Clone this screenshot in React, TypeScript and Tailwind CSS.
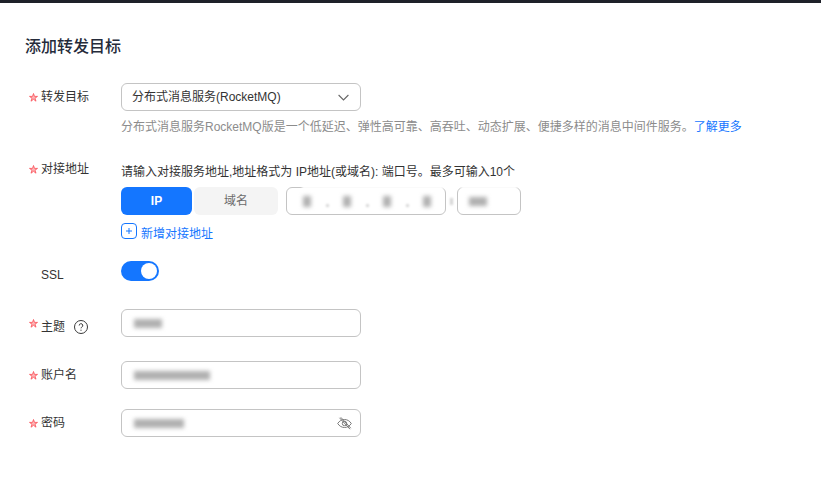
import React from "react";

const font = { fontFamily: '"Liberation Sans", "Noto Sans CJK SC", sans-serif' };

function Star({ className = "" }: { className?: string }) {
  return (
    <svg width="9" height="9" viewBox="0 0 9 9" className={`mr-[3px] shrink-0 ${className}`}>
      <path d="M4.5.5l1 2.900h3L6 5.200l1 3-2.500-1.900-2.500 1.900 1-3L.5 3.400h3z" fill="#fdb4b6" stroke="#fa4d56" strokeWidth="0.8" strokeLinejoin="round" />
    </svg>
  );
}

function Label({ text, required = true, tail, offset = "", starClass = "" }: { text: string; required?: boolean; tail?: React.ReactNode; offset?: string; starClass?: string }) {
  return (
    <div className={`flex w-[96px] shrink-0 items-center pl-1 text-xs text-[#333333] ${offset}`}>
      {required ? <Star className={starClass} /> : <span className="w-3 shrink-0" />}
      <span>{text}</span>
      {tail}
    </div>
  );
}

function Blur({ className }: { className: string }) {
  return <div className={`bg-[#b0b0b0] blur-[2px] ${className}`} />;
}

function TextBox({ blurWidth, children }: { blurWidth: string; children?: React.ReactNode }) {
  return (
    <div className="flex h-7 w-[240px] items-center justify-between rounded-md border border-[#c4c4c4] bg-white pl-3 pr-2">
      <Blur className={`h-[9px] ${blurWidth}`} />
      {children}
    </div>
  );
}

export default function App() {
  return (
    <div style={font} className="h-[477px] w-[821px] overflow-hidden bg-white">
      <div className="h-[3px] bg-[#1e2129]" />
      <div className="pl-[25px]">
        <h1 className="mt-[34px] h-[20px] text-base font-medium leading-[20px] text-[#252b3a]">添加转发目标</h1>

        <div className="mt-[26px] flex h-7">
          <Label text="转发目标" />
          <div className="flex w-[240px] items-center justify-between rounded-md border border-[#c4c4c4] pl-[10px] pr-[11px] text-xs text-[#333333]">
            <span>分布式消息服务(RocketMQ)</span>
            <svg width="11" height="7" viewBox="0 0 11 7" fill="none">
              <path d="M.6 1l4.900 4.900L10.400 1" stroke="#666666" strokeWidth="1.1" />
            </svg>
          </div>
        </div>
        <p className="ml-[96px] mt-[8px] h-4 text-xs leading-4 text-[#8c8c8c]">
          分布式消息服务RocketMQ版是一个低延迟、弹性高可靠、高吞吐、动态扩展、便捷多样的消息中间件服务。<span className="text-[#1476ff]">了解更多</span>
        </p>

        <div className="mt-[26px] flex">
          <Label text="对接地址" offset="h-4 self-start" />
          <div>
            <p className="mt-[2px] h-4 pt-px text-xs leading-4 text-[#333333]">请输入对接服务地址,地址格式为 IP地址(或域名): 端口号。最多可输入10个</p>
            <div className="mt-[8px] flex h-7 items-center">
              <div className="flex h-7 w-[71px] items-center justify-center rounded-md bg-[#1476ff] text-xs font-bold text-white">IP</div>
              <div className="ml-[2px] flex h-7 w-[84px] items-center justify-center rounded-md bg-[#f4f4f4] text-xs text-[#6b6b6b]">域名</div>
              <div className="relative ml-2 flex h-7 w-[160px] items-center gap-[32px] rounded-md border border-[#c4c4c4] pl-[16px]">
                <div className="absolute -top-[2px] left-[15px] right-[2px] h-[6px] bg-white blur-[1px]" />
                <Blur className="h-[11px] w-[8px]" />
                <Blur className="h-[11px] w-[8px]" />
                <Blur className="h-[11px] w-[8px]" />
                <Blur className="h-[11px] w-[8px]" />
                <div className="absolute left-[39px] top-[16px] h-[3px] w-[3px] rounded-full bg-[#cccccc] blur-[1px]" />
                <div className="absolute left-[79px] top-[16px] h-[3px] w-[3px] rounded-full bg-[#cccccc] blur-[1px]" />
                <div className="absolute left-[119px] top-[16px] h-[3px] w-[3px] rounded-full bg-[#cccccc] blur-[1px]" />
              </div>
              <div className="ml-[4px] h-[7px] w-[3px] bg-[#d4d4d4] blur-[1px]" />
              <div className="relative ml-[4px] flex h-7 w-[64px] items-center rounded-md border border-[#c4c4c4] pl-[11px]">
                <div className="absolute -top-[2px] left-[3px] right-[3px] h-[5px] bg-white blur-[1px]" />
                <Blur className="h-[9px] w-[18px]" />
              </div>
            </div>
            <div className="mt-[7px] flex h-[18px] items-start text-xs text-[#1476ff]">
              <svg width="16" height="16" viewBox="0 0 16 16" fill="none" className="mr-[4px] mt-px">
                <rect x="0.5" y="0.5" width="15" height="15" rx="3.5" stroke="#1476ff" />
                <path d="M8 5v6M5 8h6" stroke="#1476ff" />
              </svg>
              <span className="mt-[4px] leading-4">新增对接地址</span>
            </div>
          </div>
        </div>

        <div className="mt-[21px] flex h-5">
          <Label text="SSL" required={false} offset="mt-[8px]" />
          <div className="flex h-5 w-[38px] items-center justify-end rounded-full bg-[#1476ff] pr-[2px]">
            <div className="h-4 w-4 rounded-full bg-white" />
          </div>
        </div>

        <div className="mt-[28px] flex h-7">
          <Label
            text="主题"
            offset="mt-[8px]"
            starClass="-mt-[8px]"
            tail={
              <svg width="14" height="14" viewBox="0 0 14 14" fill="none" className="ml-[9px]">
                <circle cx="7" cy="7" r="6.500" stroke="#3a3a3a" />
                <path d="M5.200 5.500a1.800 1.800 0 1 1 2.600 1.600c-.6.300-.8.600-.8 1.200" stroke="#3a3a3a" />
                <circle cx="7" cy="10.200" r="0.600" fill="#3a3a3a" />
              </svg>
            }
          />
          <TextBox blurWidth="w-[28px]" />
        </div>

        <div className="mt-6 flex h-7">
          <Label text="账户名" />
          <TextBox blurWidth="w-[76px]" />
        </div>

        <div className="mt-5 flex h-7">
          <Label text="密码" />
          <TextBox blurWidth="w-[50px]">
            <svg width="15" height="13" viewBox="0 0 15 13" fill="none" stroke="#7a7a7a" strokeWidth="1">
              <path d="M.7 6.500C2.400 3.900 4.700 2.500 7.500 2.500s5.100 1.400 6.800 4c-1.700 2.600-4 4-6.800 4s-5.100-1.400-6.800-4z" />
              <circle cx="7.500" cy="6.500" r="2.200" />
              <path d="M2.500.8l10.500 11.400M3.800.3l10 10.900" />
            </svg>
          </TextBox>
        </div>
      </div>
    </div>
  );
}
